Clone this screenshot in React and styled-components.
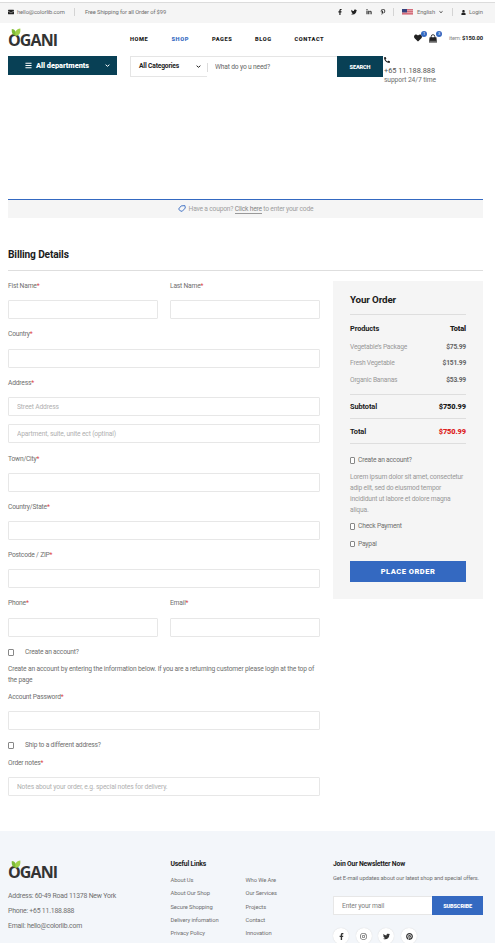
import React from 'react';
import styled, { createGlobalStyle } from 'styled-components';
import { FaFacebookF, FaTwitter, FaLinkedinIn, FaPinterestP, FaPinterest, FaInstagram, FaEnvelope, FaUser, FaHeart, FaPhoneAlt, FaBars } from 'react-icons/fa';

const Global = createGlobalStyle`
  *, *::before, *::after { box-sizing: border-box; }
  html, body { margin: 0; background: #fff; overflow: hidden; }
  body, input, button {
    font-family: Roboto, "Noto Sans", sans-serif;
    letter-spacing: -0.2px;
  }
  input::placeholder { color: inherit; opacity: 1; }
  svg { display: block; flex: none; }
`;

const Page = styled.div`
  width: 495px;
  height: 943px;
  overflow: hidden;
  display: flex;
  flex-direction: column;
  padding-top: 2px;
  color: #6f6f6f;
  font-size: 6.7px;
  line-height: 11px;
`;

/* ---------- top bar ---------- */
const TopBar = styled.div`
  flex: none;
  height: 21px;
  padding: 0 12px 2px 8px;
  border-top: 1px solid #dcdcdc;
  background: #f5f5f5;
  display: flex;
  align-items: center;
  justify-content: space-between;
  font-size: 5.8px;
  letter-spacing: -0.11px;
  white-space: nowrap;
`;
const TopGroup = styled.div`
  display: flex;
  align-items: center;
  svg { color: #222; }
`;
const TopText = styled.span`
  width: ${p => p.$w}px;
  margin-left: ${p => p.$ml || 0}px;
`;
const Divider = styled.span`
  width: 1px;
  height: 8px;
  background: #d4d4d4;
  margin: 0 ${p => p.$mr}px 0 ${p => p.$ml}px;
`;
const TopSocial = styled.div`
  display: flex;
  align-items: center;
  justify-content: space-between;
  width: 49px;
`;

/* ---------- header ---------- */
const Header = styled.header`
  flex: none;
  height: 33px;
  padding: 0 12px 0 8px;
  display: grid;
  grid-template-columns: 122px 1fr auto;
`;
const LogoBox = styled.div`
  position: relative;
  width: 50px;
  height: 20px;
  padding-top: 5px;
  margin-top: ${p => p.$mt || 0}px;
  font-family: "Open Sans", sans-serif;
  font-size: 16px;
  line-height: 14px;
  font-weight: 700;
  letter-spacing: -0.9px;
  color: #333;
`;
const Leaf = styled.svg`
  position: absolute;
  left: 3px;
  top: 0;
`;
const Nav = styled.nav`
  display: flex;
  height: 12px;
  margin-top: 10px;
  font-size: 5.7px;
  line-height: 12px;
  font-weight: 900;
  letter-spacing: 0.55px;
  color: #222;
`;
const NavItem = styled.a`
  width: ${p => p.$w}px;
  color: ${p => (p.$active ? '#3469c1' : 'inherit')};
`;
const CartArea = styled.div`
  display: flex;
  height: 12px;
  margin-top: 9px;
  align-items: center;
  color: #222;
`;
const CartIcon = styled.span`
  position: relative;
  width: ${p => p.$w}px;
`;
const Badge = styled.span`
  position: absolute;
  left: 7px;
  top: -3px;
  width: 6px;
  height: 6px;
  border-radius: 50%;
  background: #3469c1;
  color: #fff;
  font-size: 4px;
  line-height: 6px;
  text-align: center;
`;
const CartTotal = styled.span`
  display: flex;
  justify-content: space-between;
  width: 34px;
  font-size: 5.8px;
  color: #888;
  white-space: nowrap;
  b { color: #222; letter-spacing: -0.08px; }
`;

/* ---------- search row ---------- */
const HeroRow = styled.div`
  flex: none;
  height: 143px;
  padding-left: 8px;
  display: flex;
  align-items: flex-start;
  white-space: nowrap;
`;
const Departments = styled.div`
  width: 109px;
  height: 19px;
  padding: 0 7px 0 17px;
  margin-right: 13px;
  background: #084055;
  color: #fff;
  display: flex;
  align-items: center;
  font-size: 7.4px;
  font-weight: 900;
  letter-spacing: -0.04px;
  span { width: 69px; margin-left: 4px; }
`;
const SearchForm = styled.div`
  display: flex;
  width: 253px;
  height: 21px;
  border-top: 1px solid #e5e5e5;
`;
const Category = styled.div`
  width: 77px;
  height: 20px;
  padding: 0 6px 1px 8px;
  border-left: 1px solid #e5e5e5;
  border-bottom: 1px solid #e5e5e5;
  display: flex;
  align-items: center;
  justify-content: space-between;
  color: #222;
  font-weight: 700;
  letter-spacing: -0.17px;
`;
const SearchInput = styled.input`
  width: 130px;
  height: 9px;
  margin-top: 6px;
  padding: 0 0 0 7px;
  border: 0;
  border-left: 1px solid #dcdcdc;
  outline: 0;
  font-size: 6.7px;
  line-height: 9px;
  letter-spacing: -0.17px;
  color: #666;
`;
const SearchButton = styled.button`
  width: 46px;
  height: 21px;
  margin-top: -1px;
  border: 0;
  padding: 0;
  background: #084055;
  color: #fff;
  font-size: 5.6px;
  font-weight: 900;
  letter-spacing: -0.15px;
`;
const Phone = styled.div`
  padding: 1px 0 0 1px;
  line-height: 9px;
  letter-spacing: -0.1px;
  svg { color: #222; margin-bottom: 3px; }
`;
const PhoneNumber = styled.div`
  font-size: 7.4px;
  line-height: 10px;
  letter-spacing: -0.03px;
  color: #555;
`;

/* ---------- checkout ---------- */
const Coupon = styled.div`
  flex: none;
  height: 19px;
  margin: 0 12px 0 8px;
  padding-bottom: 1px;
  border-top: 1px solid #3469c1;
  background: #f5f5f5;
  display: flex;
  align-items: center;
  justify-content: center;
  gap: 3px;
  color: #a0a0a0;
  svg { color: #3469c1; }
  a { color: #888; border-bottom: 1px solid #999; }
  span { line-height: 8px; }
`;
const BillingTitle = styled.h4`
  flex: none;
  height: 53px;
  margin: 0 12px 10px 8px;
  padding-top: 30px;
  border-bottom: 1px solid #dedede;
  font-size: 10.2px;
  line-height: 14px;
  font-weight: 700;
  letter-spacing: -0.15px;
  color: #1c1c1c;
`;
const Checkout = styled.div`
  flex: none;
  height: 550px;
  display: grid;
  grid-template-columns: 312px 150px;
  column-gap: 13px;
  align-items: start;
  padding-left: 8px;
`;
const Form = styled.form`
  display: flex;
  flex-direction: column;
`;
const Pair = styled.div`
  display: grid;
  grid-template-columns: 150px 150px;
  column-gap: 12px;
`;
const Field = styled.label`
  display: flex;
  flex-direction: column;
  height: ${p => p.$h || 48}px;
`;
const FieldName = styled.span`
  height: ${p => p.$h || 19}px;
  line-height: 10px;
  i { font-style: normal; color: #dd4444; }
`;
const TextInput = styled.input`
  width: 100%;
  height: 19px;
  padding: 0 8px;
  border: 1px solid #e7e7e7;
  border-radius: 1px;
  outline: 0;
  font-size: 6.7px;
  letter-spacing: -0.15px;
  color: #b0b0b0;
  & + & { margin-top: 8px; }
`;
const Check = styled.label`
  display: flex;
  align-items: center;
  height: ${p => p.$h || 11}px;
  padding-top: ${p => p.$pt || 0}px;
  gap: ${p => p.$gap}px;
`;
const Box = styled.span`
  width: ${p => p.$w || 6}px;
  height: ${p => p.$h || 7}px;
  border: 1px solid #888;
  border-radius: 1px;
  background: #fff;
`;
const FormNote = styled.p`
  margin: 6px 0 6px 0;
  letter-spacing: -0.165px;
`;

/* ---------- order panel ---------- */
const Order = styled.aside`
  height: 318px;
  padding: 11px 17px 0;
  background: #f5f5f5;
`;
const OrderTitle = styled.h4`
  margin: 0;
  height: 23px;
  border-bottom: 1px solid #dedede;
  font-size: 9.8px;
  line-height: 15px;
  font-weight: 700;
  letter-spacing: -0.14px;
  color: #1c1c1c;
`;
const OrderRow = styled.div`
  display: flex;
  justify-content: space-between;
  height: ${p => p.$h}px;
  line-height: ${p => p.$lh || p.$h}px;
  font-size: ${p => (p.$strong ? 7.4 : 6.7)}px;
  font-weight: ${p => (p.$strong ? 700 : 400)};
  letter-spacing: ${p => (p.$strong ? -0.1 : -0.22)}px;
  color: ${p => (p.$strong ? '#1c1c1c' : '#999')};
  border-bottom: ${p => (p.$rule ? '1px solid #dedede' : '0')};
  b { color: ${p => (p.$red ? '#dd2222' : p.$strong ? '#1c1c1c' : '#666')}; }
`;
const OrderText = styled.p`
  margin: 7px 0 4px 0;
  height: 44px;
  color: #999;
  letter-spacing: -0.18px;
`;
const PlaceOrder = styled.button`
  display: block;
  width: 116px;
  height: 21px;
  margin-top: 6px;
  padding: 0;
  border: 0;
  background: #3469c1;
  color: #fff;
  font-size: 7.5px;
  font-weight: 900;
  letter-spacing: 0.5px;
`;

/* ---------- footer ---------- */
const Footer = styled.footer`
  flex: none;
  height: 120px;
  padding: 27px 12px 0 8px;
  background: #f3f6fa;
  display: grid;
  grid-template-columns: 162.5px 75px 87.5px 150px;
  align-items: start;
`;
const Address = styled.div`
  margin-top: 9px;
  font-size: 6.9px;
  line-height: 15px;
  letter-spacing: -0.22px;
`;
const FootTitle = styled.h6`
  margin: 0;
  height: 15px;
  font-size: 6.8px;
  line-height: 12px;
  font-weight: 700;
  letter-spacing: -0.18px;
  color: #1c1c1c;
  white-space: nowrap;
`;
const Links = styled.div`
  display: flex;
  flex-direction: column;
  margin-top: 1px;
  font-size: 5.8px;
  line-height: 13.3px;
  letter-spacing: -0.09px;
`;
const NewsText = styled.p`
  margin: 0 0 12px;
  font-size: 5.8px;
  line-height: 11px;
  letter-spacing: -0.13px;
  white-space: nowrap;
`;
const Subscribe = styled.div`
  display: flex;
  height: 19px;
  input { width: 99px; height: 19px; border-right: 0; color: #808080; }
`;
const SubscribeButton = styled.button`
  width: 51px;
  padding: 0;
  border: 0;
  background: #3469c1;
  color: #fff;
  font-size: 5.6px;
  font-weight: 900;
  letter-spacing: -0.15px;
`;
const Socials = styled.div`
  display: flex;
  gap: 6.7px;
  margin-top: 13px;
`;
const Circle = styled.span`
  width: 16px;
  height: 16px;
  border-radius: 50%;
  background: #fff;
  box-shadow: 0 0 1px #ccc;
  display: flex;
  align-items: center;
  justify-content: center;
  color: #333;
`;

const Logo = ({ mt }) => (
  <LogoBox $mt={mt}>
    OGANI
    <Leaf width="10" height="8" viewBox="0 0 10 8">
      <path d="M5 7.8C1.6 7.4.4 5 .8 1 4 1.2 5.6 3.8 5 7.8Z" fill="#7dbb35" />
      <path d="M4.6 7.8C3.6 3.6 5.2 1 9.3.4 9.8 4.8 8.4 7.4 4.6 7.8Z" fill="#a0d14a" />
    </Leaf>
  </LogoBox>
);

const Chevron = ({ size = 5 }) => (
  <svg width={size} height={size} viewBox="0 0 5 5" fill="none" stroke="currentColor" strokeWidth="1">
    <path d="M.6 1.7 2.5 3.3 4.4 1.7" />
  </svg>
);

const Bag = () => (
  <svg width="8" height="9" viewBox="0 0 8 9">
    <path d="M2.2 4V2.5a1.8 1.8 0 0 1 3.6 0V4" fill="none" stroke="currentColor" strokeWidth=".9" />
    <path d="M.6 3.3H7.4L8 8.6H0Z" fill="currentColor" />
    <path d="M.3 7.3H7.7" stroke="#fff" strokeWidth=".4" />
  </svg>
);

const Flag = () => (
  <svg width="11" height="6" viewBox="0 0 11 6">
    <rect width="11" height="6" fill="#e3a0a8" />
    <path d="M0 .5H11M0 2.5H11M0 4.5H11" stroke="#cf6070" strokeWidth=".8" />
    <rect width="5" height="3.4" fill="#35427d" />
  </svg>
);

const Tag = () => (
  <svg width="8" height="7" viewBox="0 0 8 7" fill="none" stroke="currentColor" strokeWidth=".9">
    <path d="M.6 4 3.2.9 6.9.6 7.3 3 4.2 6.3 2.4 6Z" strokeLinejoin="round" />
  </svg>
);

const Entry = ({ name, h, nameH, children }) => (
  <Field $h={h}>
    <FieldName $h={nameH}>{name}<i>*</i></FieldName>
    {children || <TextInput />}
  </Field>
);

const products = [["Vegetable’s Package", '$75.99', 16], ['Fresh Vegetable', '$151.99', 17], ['Organic Bananas', '$53.99', 16]];

export default function App() {
  return (
    <Page>
      <Global />
      <TopBar>
        <TopGroup>
          <FaEnvelope size={6} />
          <TopText $w={48} $ml={3}>hello@colorlib.com</TopText>
          <Divider $ml={9} $mr={10} />
          <TopText $w={82}>Free Shipping for all Order of $99</TopText>
        </TopGroup>
        <TopGroup>
          <TopSocial>
            <FaFacebookF size={6} />
            <FaTwitter size={6} />
            <FaLinkedinIn size={6} />
            <FaPinterestP size={6} />
          </TopSocial>
          <Divider $ml={7} $mr={8} />
          <Flag />
          <TopText $w={22} $ml={4}>English</TopText>
          <Chevron size={4} />
          <Divider $ml={9} $mr={8} />
          <FaUser size={5} />
          <TopText $w={14} $ml={3}>Login</TopText>
        </TopGroup>
      </TopBar>

      <Header>
        <Logo mt={5} />
        <Nav>
          <NavItem $w={41.5}>HOME</NavItem>
          <NavItem $w={40.5} $active>SHOP</NavItem>
          <NavItem $w={43}>PAGES</NavItem>
          <NavItem $w={39.5}>BLOG</NavItem>
          <NavItem $w={32}>CONTACT</NavItem>
        </Nav>
        <CartArea>
          <CartIcon $w={15}><FaHeart size={8} /><Badge>1</Badge></CartIcon>
          <CartIcon $w={20}><Bag /><Badge>3</Badge></CartIcon>
          <CartTotal><span>item:</span><b>$150.00</b></CartTotal>
        </CartArea>
      </Header>

      <HeroRow>
        <Departments>
          <FaBars size={7} />
          <span>All departments</span>
          <Chevron />
        </Departments>
        <SearchForm>
          <Category>All Categories <Chevron /></Category>
          <SearchInput placeholder="What do yo u need?" />
          <SearchButton>SEARCH</SearchButton>
        </SearchForm>
        <Phone>
          <FaPhoneAlt size={6} />
          <PhoneNumber>+65 11.188.888</PhoneNumber>
          support 24/7 time
        </Phone>
      </HeroRow>

      <Coupon>
        <Tag />
        <span>Have a coupon? <a>Click here</a> to enter your code</span>
      </Coupon>
      <BillingTitle>Billing Details</BillingTitle>

      <Checkout>
        <Form>
          <Pair>
            <Entry name="Fist Name" />
            <Entry name="Last Name" />
          </Pair>
          <Entry name="Country" h={49} nameH={20} />
          <Entry name="Address" h={76}>
            <TextInput placeholder="Street Address" />
            <TextInput placeholder="Apartment, suite, unite ect (optinal)" />
          </Entry>
          <Entry name="Town/City" />
          <Entry name="Country/State" />
          <Entry name="Postcode / ZIP" />
          <Pair>
            <Entry name="Phone" h={49} nameH={20} />
            <Entry name="Email" h={49} nameH={20} />
          </Pair>
          <Check $gap={11}><Box />Create an account?</Check>
          <FormNote>
            Create an account by entering the information below. If you are a returning customer please login at the top of the page
          </FormNote>
          <Entry name="Account Password" />
          <Check $gap={11}><Box />Ship to a different address?</Check>
          <Field as="div" $h={7} />
          <Entry name="Order notes">
            <TextInput placeholder="Notes about your order, e.g. special notes for delivery." />
          </Entry>
        </Form>

        <Order>
          <OrderTitle>Your Order</OrderTitle>
          <OrderRow $h={24} $lh={28} $strong><span>Products</span><b>Total</b></OrderRow>
          {products.map(([name, price, h]) => (
            <OrderRow key={name} $h={h}><span>{name}</span><b>{price}</b></OrderRow>
          ))}
          <OrderRow $h={7} $rule />
          <OrderRow $h={24} $strong $rule><span>Subtotal</span><b>$750.99</b></OrderRow>
          <OrderRow $h={25} $strong $rule $red><span>Total</span><b>$750.99</b></OrderRow>
          <OrderRow $h={10} />
          <Check $gap={3} $pt={1}><Box $w={5} />Create an account?</Check>
          <OrderText>Lorem ipsum dolor sit amet, consectetur adip elit, sed do eiusmod tempor incididunt ut labore et dolore magna aliqua.</OrderText>
          <Check $gap={3} $h={12} $pt={1}><Box $w={5} />Check Payment</Check>
          <Check $gap={3} $h={23} $pt={1}><Box $w={5} $h={6} />Paypal</Check>
          <PlaceOrder>PLACE ORDER</PlaceOrder>
        </Order>
      </Checkout>

      <Footer>
        <div>
          <Logo mt={2} />
          <Address>
            Address: 60-49 Road 11378 New York<br />
            Phone: +65 11.188.888<br />
            Email: hello@colorlib.com
          </Address>
        </div>
        <div>
          <FootTitle>Useful Links</FootTitle>
          <Links>
            <a>About Us</a><a>About Our Shop</a><a>Secure Shopping</a><a>Delivery infomation</a><a>Privacy Policy</a>
          </Links>
        </div>
        <div>
          <FootTitle />
          <Links>
            <a>Who We Are</a><a>Our Services</a><a>Projects</a><a>Contact</a><a>Innovation</a>
          </Links>
        </div>
        <div>
          <FootTitle>Join Our Newsletter Now</FootTitle>
          <NewsText>Get E-mail updates about our latest shop and special offers.</NewsText>
          <Subscribe>
            <TextInput placeholder="Enter your mail" />
            <SubscribeButton>SUBSCRIBE</SubscribeButton>
          </Subscribe>
          <Socials>
            <Circle><FaFacebookF size={7} /></Circle>
            <Circle><FaInstagram size={7} /></Circle>
            <Circle><FaTwitter size={7} /></Circle>
            <Circle><FaPinterest size={7} /></Circle>
          </Socials>
        </div>
      </Footer>
    </Page>
  );
}
